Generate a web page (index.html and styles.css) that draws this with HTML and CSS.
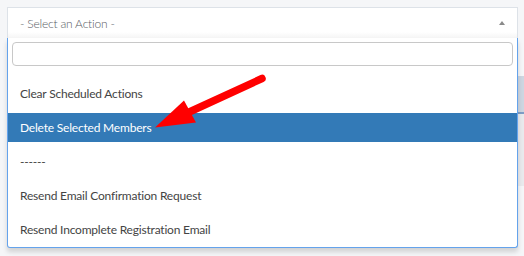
FILE: index.html
```html
<!DOCTYPE html>
<html>
<head>
<meta charset="utf-8">
<link rel="stylesheet" href="styles.css">
</head>
<body>
<div class="page">
  <div class="select">
    <span class="select-label">- Select an Action -</span>
    <span class="caret"></span>
  </div>
  <div class="dropdown">
    <div class="search"><input class="search-input" type="text"></div>
    <ul class="results">
      <li class="option">Clear Scheduled Actions</li>
      <li class="option highlighted">Delete Selected Members</li>
      <li class="option">------</li>
      <li class="option">Resend Email Confirmation Request</li>
      <li class="option">Resend Incomplete Registration Email</li>
    </ul>
  </div>
  <svg class="arrow" width="524" height="256" viewBox="0 0 524 256">
    <line x1="262" y1="78.5" x2="186" y2="113.5" stroke="#ff0000" stroke-width="7.5" stroke-linecap="round"/>
    <polygon points="155,127.5 184,100.5 196,122.5" fill="#ff0000"/>
  </svg>
</div>
</body>
</html>
```
FILE: styles.css
```css
* { box-sizing: border-box; }
html, body { margin: 0; padding: 0; }
body {
  width: 524px;
  height: 256px;
  overflow: hidden;
  background:
    linear-gradient(#cdd6e1, #cdd6e1) right 0 top 76px / 6px 36px no-repeat,
    linear-gradient(#7f9ec6, #7f9ec6) right 0 top 112px / 6px 2px no-repeat,
    linear-gradient(#e9eaed, #e9eaed) right 0 top 114px / 6px 72px no-repeat,
    #f5f6f8;
  font-family: Lato, "Open Sans", sans-serif;
}
.page {
  position: relative;
  padding: 7px 0 0 7px;
  width: 524px;
  height: 256px;
}
.select {
  width: 511px;
  height: 31px;
  border: 1px solid #dde2e8;
  border-bottom: none;
  background: linear-gradient(to bottom, #ffffff 0%, #ffffff 80%, #f5f5f5 100%);
  display: flex;
  align-items: center;
  padding: 0 12px;
}
.select-label {
  flex: 1;
  font-size: 12px;
  letter-spacing: -0.2px;
  color: #585d64;
  font-weight: 300;
}
.caret {
  width: 0;
  height: 0;
  border-left: 3.5px solid transparent;
  border-right: 3.5px solid transparent;
  border-bottom: 4px solid #8a8a8a;
}
.dropdown {
  width: 511px;
  height: 210px;
  background: #fff;
  border: 1px solid #64a3ec;
  border-top: none;
  border-radius: 0 0 3px 3px;
  box-shadow: 0 4px 5px rgba(0, 0, 0, 0.15);
  padding: 4px 4px 0 4px;
}
.search-input {
  display: block;
  width: 100%;
  height: 24px;
  border: 1px solid #c8c8c8;
  border-radius: 4px;
  outline: none;
  background: #fff;
}
.results {
  list-style: none;
  margin: 13px -4px 0 -4px;
  padding: 0;
  display: flex;
  flex-direction: column;
  gap: 5px;
}
.option {
  height: 29px;
  display: flex;
  align-items: center;
  padding: 0 12px;
  font-size: 12px;
  letter-spacing: -0.2px;
  color: #444;
}
.option.highlighted {
  background: #337ab7;
  color: #fff;
}
.arrow {
  position: absolute;
  left: 0;
  top: 0;
  pointer-events: none;
}
```
